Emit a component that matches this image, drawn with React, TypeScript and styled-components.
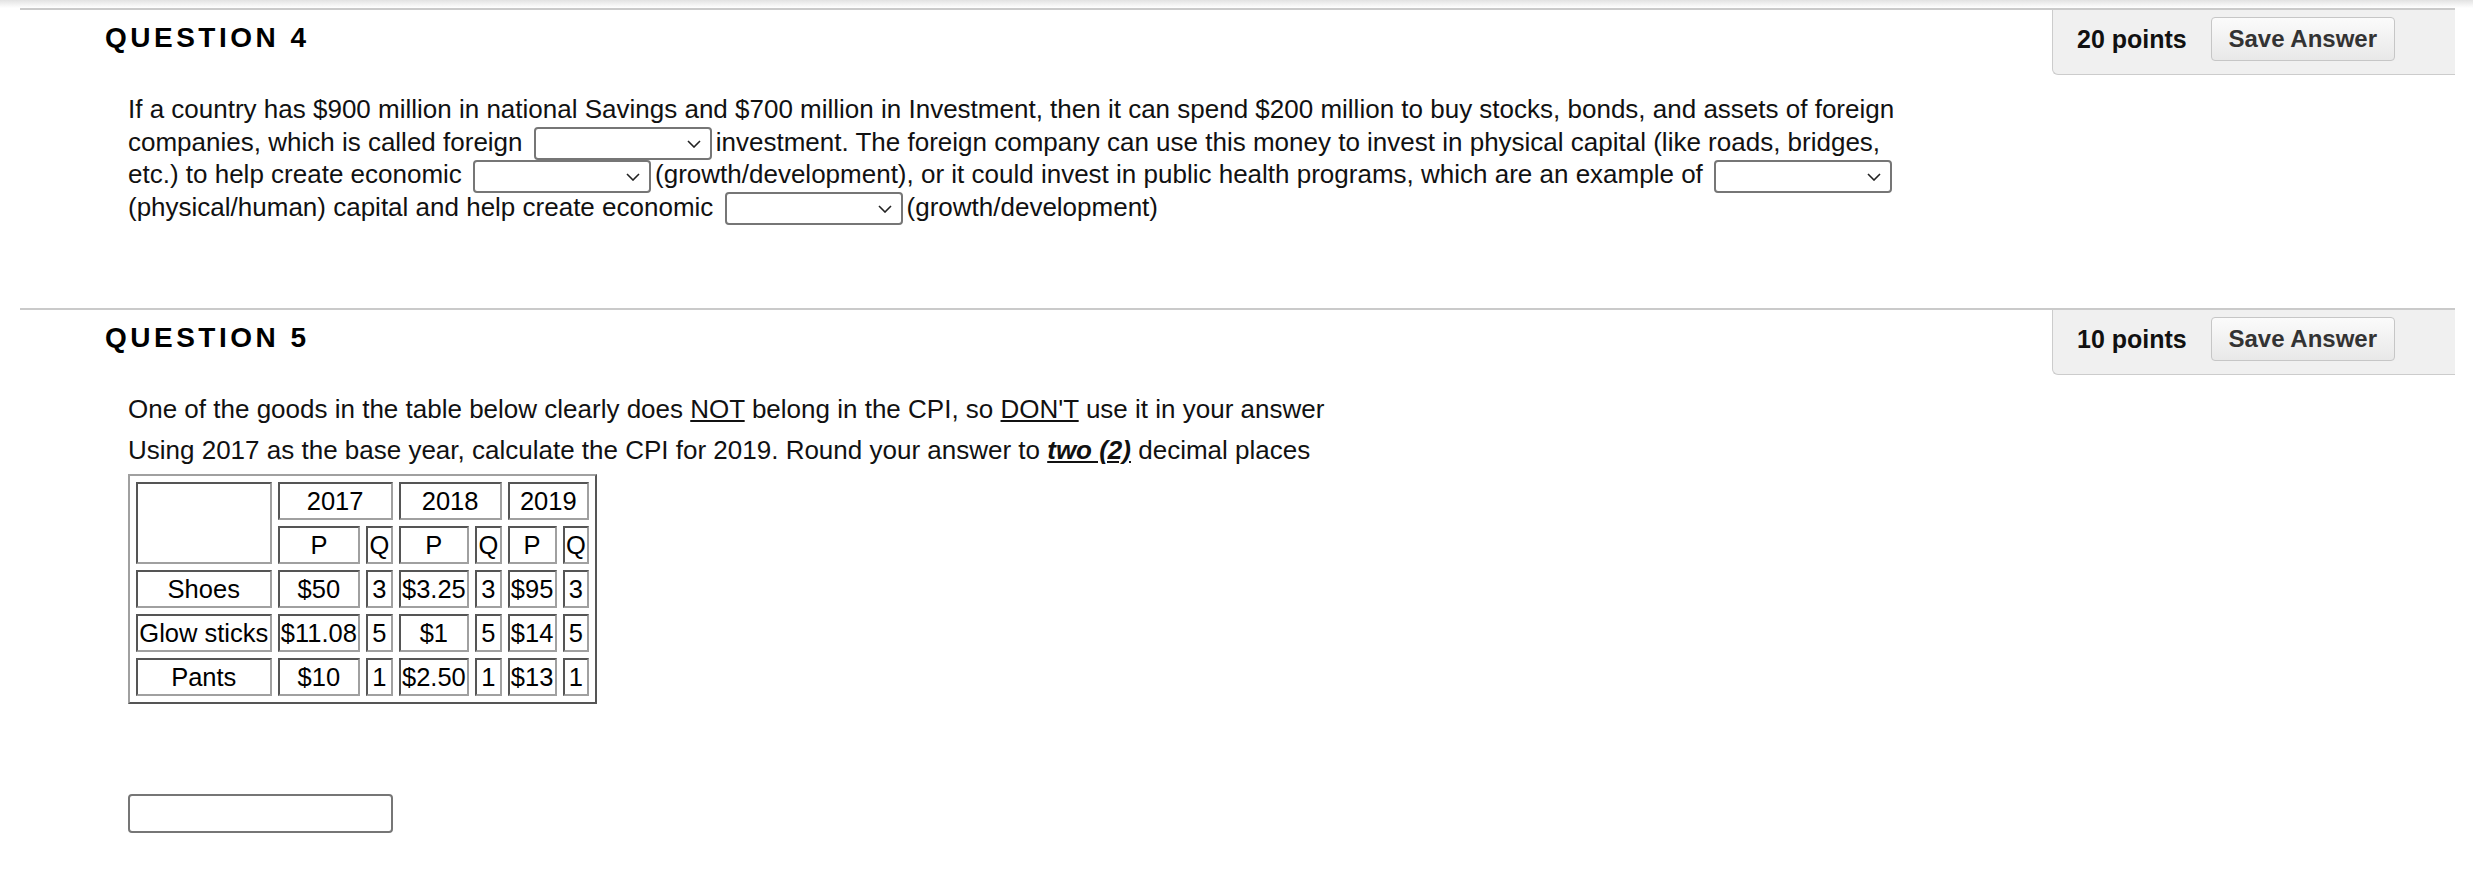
import React from 'react'
import styled, { createGlobalStyle } from 'styled-components'

const GlobalStyle = createGlobalStyle`
  html, body {
    margin: 0;
    padding: 0;
    background: #ffffff;
  }
  body {
    font-family: "Liberation Sans", Arial, Helvetica, sans-serif;
    color: #111111;
  }
`

const Page = styled.div`
  width: 2473px;
  min-height: 880px;
  background: #ffffff;
`
const TopShade = styled.div`
  height: 8px;
  background: linear-gradient(to bottom, #e2e2e2, #f4f4f4 60%, #ffffff);
`
const Question = styled.section`
  margin: 0 18px 0 20px;
  border-top: 2px solid #cacaca;
`
const QuestionHeader = styled.div`
  display: flex;
  justify-content: space-between;
  align-items: flex-start;
`
const QuestionTitle = styled.h3`
  margin: 11px 0 0 85px;
  font-size: 28px;
  line-height: 33px;
  font-weight: bold;
  letter-spacing: 0.125em;
  color: #000000;
`
const PointsBox = styled.div`
  box-sizing: border-box;
  width: 403px;
  height: 65px;
  display: flex;
  align-items: center;
  gap: 24px;
  padding: 0 0 6px 24px;
  background: #f0f0f0;
  border-left: 1px solid #cccccc;
  border-bottom: 1px solid #cccccc;
  border-bottom-left-radius: 6px;
`
const Points = styled.span`
  font-size: 25px;
  font-weight: bold;
  color: #111111;
`
const SaveButton = styled.button`
  box-sizing: border-box;
  width: 184px;
  height: 44px;
  padding: 0;
  font-family: "Liberation Sans", Arial, sans-serif;
  font-size: 24px;
  font-weight: bold;
  color: #333333;
  background: linear-gradient(to bottom, #fbfbfb, #e8e8e8);
  border: 1px solid #c6c6c6;
  border-radius: 4px;
`
const QuestionBody = styled.div<{ $bottom: number }>`
  padding: 18px 0 ${({ $bottom }) => $bottom}px 108px;
  font-size: 26px;
  line-height: 32.5px;
  color: #111111;
`
const Para = styled.p<{ $gap?: number }>`
  margin: 0 0 ${({ $gap }) => $gap ?? 0}px 0;
`
const SelectWrap = styled.span`
  position: relative;
  display: inline-block;
  vertical-align: middle;
  margin: -5px 4px -5px 4px;
  line-height: 0;
`
const Select = styled.select`
  box-sizing: border-box;
  appearance: none;
  width: 178px;
  height: 33px;
  background: #ffffff;
  border: 2px solid #767676;
  border-radius: 4px;
  font-size: 20px;
`
const Chevron = styled.svg`
  position: absolute;
  right: 11px;
  top: 13px;
  pointer-events: none;
`
const Under = styled.u``
const Emph = styled.u`
  font-weight: bold;
  font-style: italic;
`
const PriceTable = styled.table`
  border-collapse: separate;
  border-spacing: 6px 6px;
  border-style: solid;
  border-width: 2px;
  border-color: #a0a0a0 #555555 #555555 #a0a0a0;
  font-size: 25.5px;
  line-height: 29px;
  color: #000000;
  margin-bottom: 90px;
`
const Cell = styled.td`
  border-style: solid;
  border-width: 2px;
  border-color: #555555 #a0a0a0 #a0a0a0 #555555;
  padding: 2.5px 1.3px;
  text-align: center;
  white-space: nowrap;
`
const AnswerInput = styled.input`
  box-sizing: border-box;
  display: block;
  width: 265px;
  height: 39px;
  border: 2px solid #767676;
  border-radius: 4px;
  background: #ffffff;
`

const Dropdown = () => (
  <SelectWrap>
    <Select defaultValue="">
      <option value=""></option>
    </Select>
    <Chevron width="14" height="8" viewBox="0 0 14 8">
      <path d="M1 1 L7 7 L13 1" fill="none" stroke="#222" strokeWidth="1.6" />
    </Chevron>
  </SelectWrap>
)

const Header = ({ n, points }: { n: number; points: number }) => (
  <QuestionHeader>
    <QuestionTitle>QUESTION {n}</QuestionTitle>
    <PointsBox>
      <Points>{points} points</Points>
      <SaveButton>Save Answer</SaveButton>
    </PointsBox>
  </QuestionHeader>
)

const rows = [
  ['Shoes', '$50', '3', '$3.25', '3', '$95', '3'],
  ['Glow sticks', '$11.08', '5', '$1', '5', '$14', '5'],
  ['Pants', '$10', '1', '$2.50', '1', '$13', '1'],
]

const App = () => (
  <Page>
    <GlobalStyle />
    <TopShade />
    <Question>
      <Header n={4} points={20} />
      <QuestionBody $bottom={85}>
        <Para>
          If a country has $900 million in national Savings and $700 million in
          Investment, then it can spend $200 million to buy stocks, bonds, and
          assets of foreign
          <br />
          companies, which is called foreign <Dropdown />investment. The foreign
          company can use this money to invest in physical capital (like roads,
          bridges,
          <br />
          etc.) to help create economic <Dropdown />(growth/development), or it
          could invest in public health programs, which are an example of{' '}
          <Dropdown />
          <br />
          (physical/human) capital and help create economic <Dropdown />
          (growth/development)
        </Para>
      </QuestionBody>
    </Question>
    <Question>
      <Header n={5} points={10} />
      <QuestionBody $bottom={40}>
        <Para $gap={8}>
          One of the goods in the table below clearly does <Under>NOT</Under>{' '}
          belong in the CPI, so <Under>DON'T</Under> use it in your answer
        </Para>
        <Para $gap={8}>
          Using 2017 as the base year, calculate the CPI for 2019. Round your
          answer to <Emph>two (2)</Emph> decimal places
        </Para>
        <PriceTable>
          <tbody>
            <tr>
              <Cell rowSpan={2}></Cell>
              <Cell colSpan={2}>2017</Cell>
              <Cell colSpan={2}>2018</Cell>
              <Cell colSpan={2}>2019</Cell>
            </tr>
            <tr>
              <Cell>P</Cell>
              <Cell>Q</Cell>
              <Cell>P</Cell>
              <Cell>Q</Cell>
              <Cell>P</Cell>
              <Cell>Q</Cell>
            </tr>
            {rows.map((r) => (
              <tr key={r[0]}>
                {r.map((c, i) => (
                  <Cell key={i}>{c}</Cell>
                ))}
              </tr>
            ))}
          </tbody>
        </PriceTable>
        <AnswerInput type="text" />
      </QuestionBody>
    </Question>
  </Page>
)

export default App
